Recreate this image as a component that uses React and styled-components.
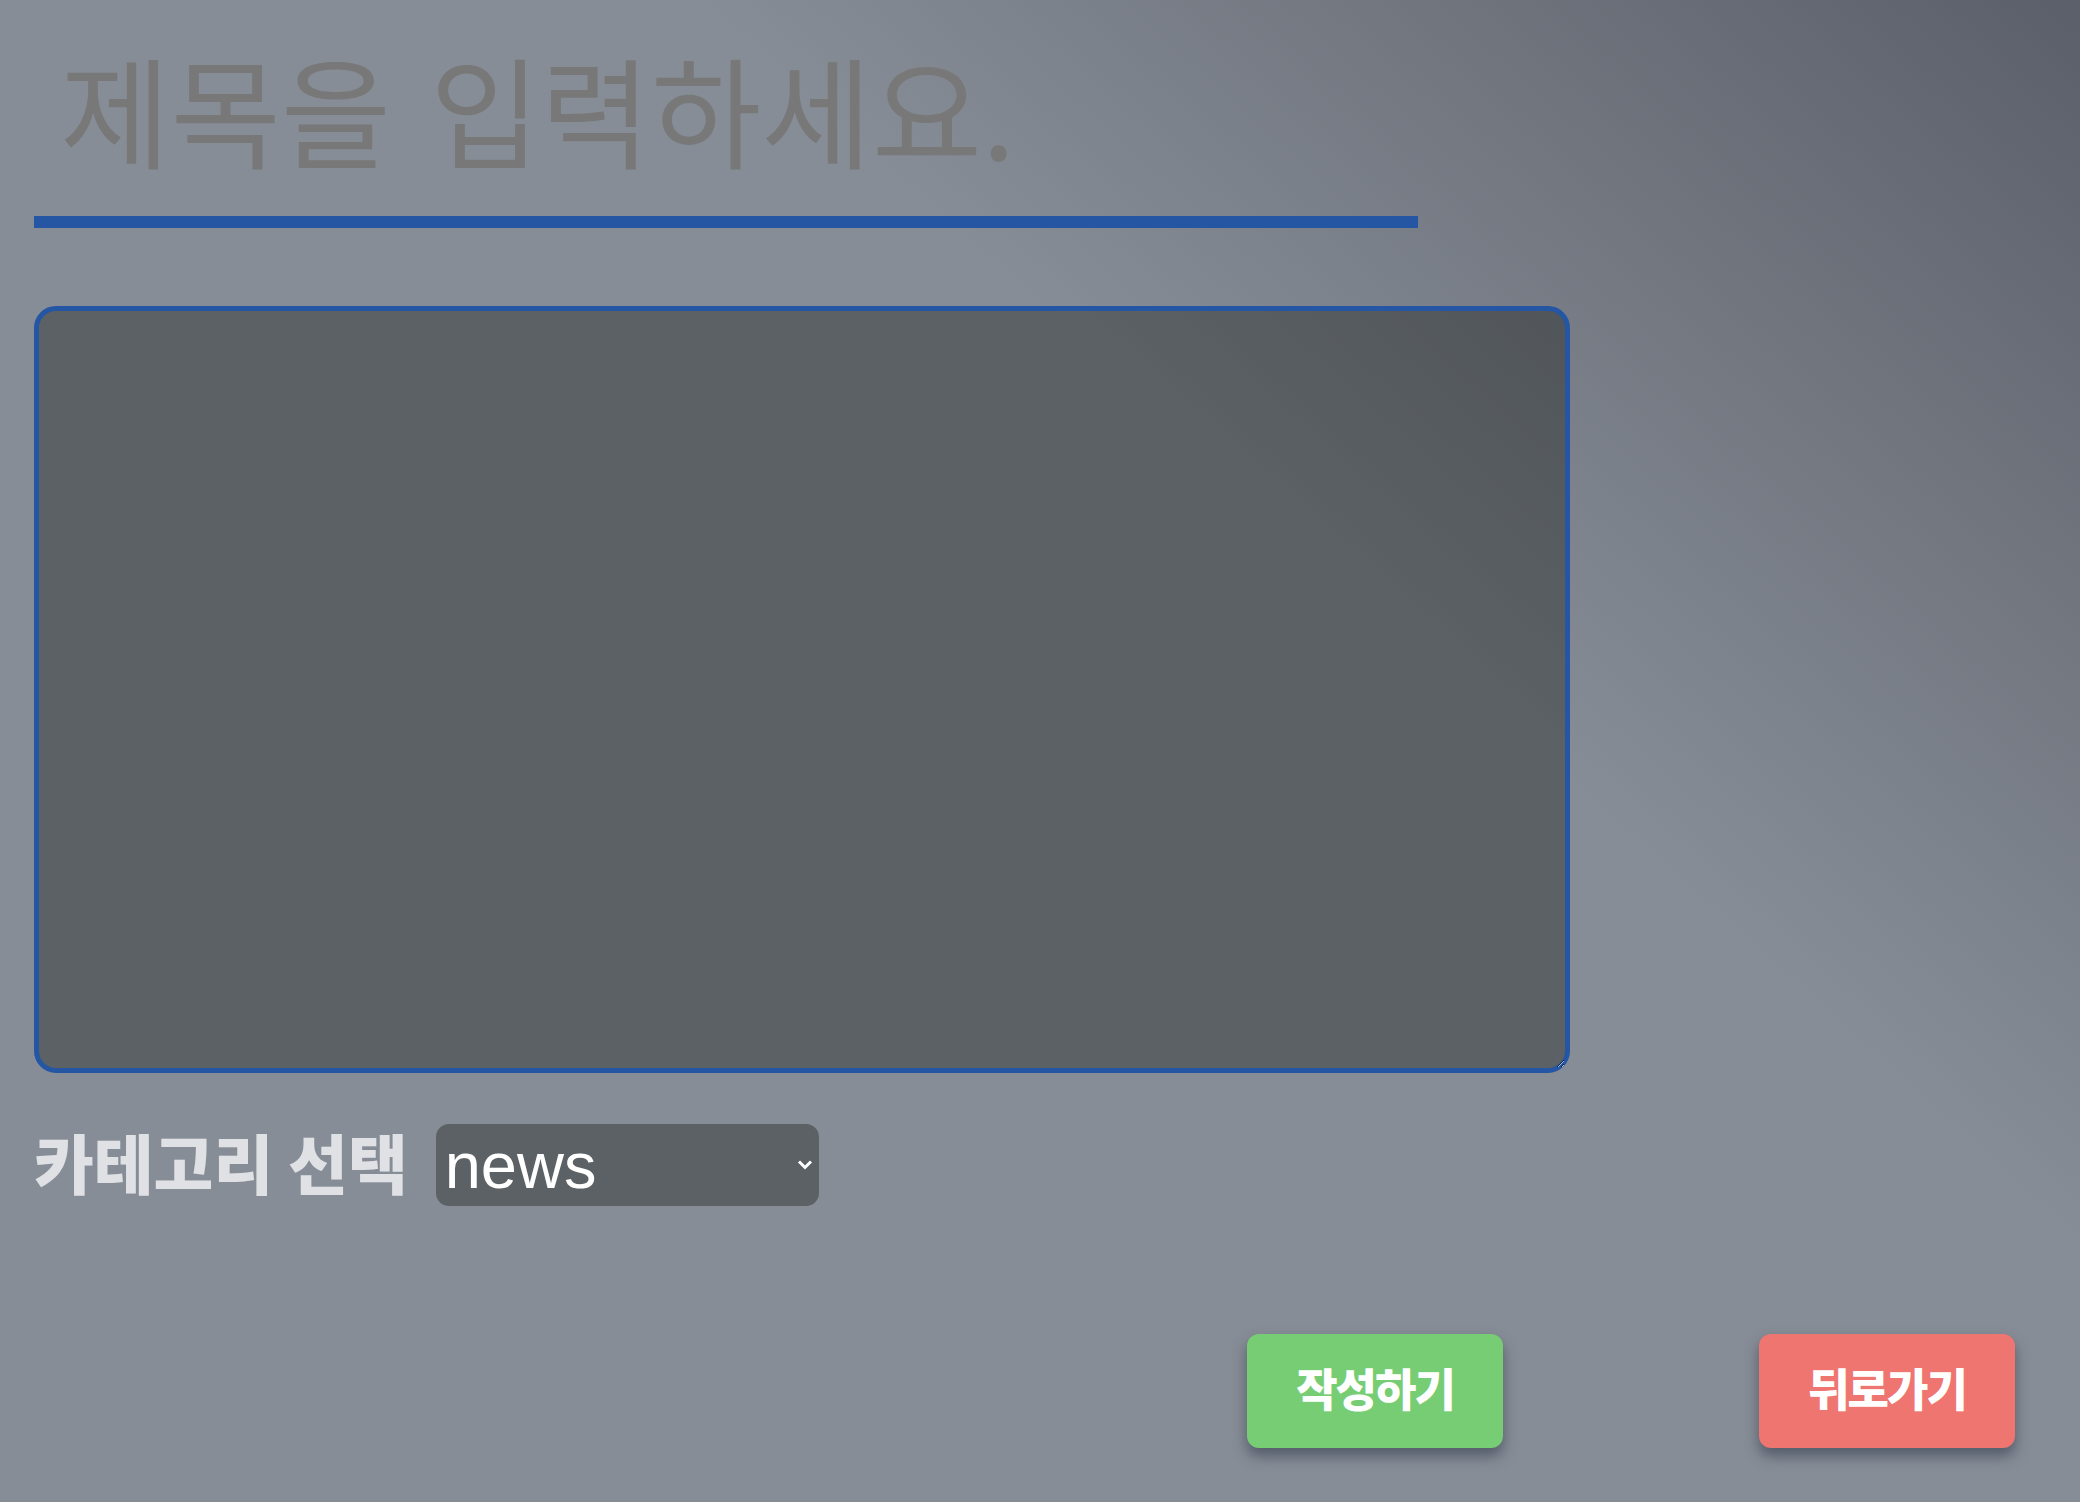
import React from "react";
import styled, { createGlobalStyle } from "styled-components";

const GlobalStyle = createGlobalStyle`
  html, body {
    margin: 0;
    padding: 0;
  }
  body {
    min-height: 1502px;
    background: linear-gradient(222deg, #5b5f69 0%, #878d96 37%, #878d96 100%);
    background-attachment: fixed;
    font-family: "Noto Sans CJK KR", "Noto Sans", sans-serif;
  }
`;

const Page = styled.main`
  box-sizing: border-box;
  width: 2080px;
  min-height: 1502px;
  padding: 0 65px 0 34px;
  display: flex;
  flex-direction: column;
`;

const TitleInput = styled.input`
  box-sizing: border-box;
  width: 1384px;
  height: 228px;
  padding: 0 24px 0 26px;
  border: none;
  border-bottom: 12px solid #2456a4;
  background: transparent;
  outline: none;
  font-family: "Noto Sans CJK KR", sans-serif;
  font-weight: 400;
  font-size: 120px;
  letter-spacing: 0px;
  word-spacing: 12px;
  color: #333;
  &::placeholder {
    color: #787878;
  }
`;

const Body = styled.textarea`
  box-sizing: border-box;
  margin-top: 78px;
  width: 1536px;
  height: 767px;
  border: 5px solid #2456a4;
  border-radius: 22px;
  background: rgba(4, 7, 0, 0.32);
  color: #fff;
  font-family: "Noto Sans CJK KR", sans-serif;
  font-size: 40px;
  padding: 16px;
  outline: none;
`;

const CategoryRow = styled.div`
  margin-top: 51px;
  display: flex;
  align-items: center;
  gap: 28px;
`;

const CategoryLabel = styled.label`
  font-family: "Noto Sans CJK KR", sans-serif;
  font-weight: 900;
  font-size: 65px;
  letter-spacing: 0px;
  color: #dfe1e5;
  line-height: 1;
  margin-top: -8px;
`;

const SelectWrap = styled.div`
  position: relative;
  width: 383px;
  height: 82px;
`;

const Select = styled.select`
  appearance: none;
  -webkit-appearance: none;
  box-sizing: border-box;
  width: 100%;
  height: 100%;
  border: none;
  border-radius: 13px;
  background: rgba(4, 7, 0, 0.32);
  color: #fff;
  font-family: "Liberation Sans", Arial, sans-serif;
  font-size: 65px;
  padding: 0 40px 0 9px;
  outline: none;
`;

const Chevron = styled.svg`
  position: absolute;
  right: 6px;
  top: 35px;
  width: 16px;
  height: 11px;
  pointer-events: none;
`;

const ButtonRow = styled.div`
  margin-top: 128px;
  display: flex;
  justify-content: flex-end;
  gap: 256px;
`;

const ActionButton = styled.button`
  box-sizing: border-box;
  width: 256px;
  height: 114px;
  padding: 0 0 8px;
  border: none;
  border-radius: 12px;
  background: ${(p) => p.$bg};
  color: #fff;
  font-family: "Noto Sans CJK KR", sans-serif;
  font-weight: 900;
  font-size: 45px;
  letter-spacing: -2px;
  box-shadow: 0 8px 14px rgba(40, 50, 70, 0.55);
  cursor: pointer;
`;

export default function App() {
  return (
    <>
      <GlobalStyle />
      <Page>
        <TitleInput placeholder="제목을 입력하세요." />
        <Body />
        <CategoryRow>
          <CategoryLabel htmlFor="cat">카테고리 선택</CategoryLabel>
          <SelectWrap>
            <Select id="cat" defaultValue="news">
              <option value="news">news</option>
              <option value="sports">sports</option>
              <option value="life">life</option>
            </Select>
            <Chevron viewBox="0 0 16 11">
              <path d="M2 2.5 L8 8.5 L14 2.5" fill="none" stroke="#fff" strokeWidth="3" />
            </Chevron>
          </SelectWrap>
        </CategoryRow>
        <ButtonRow>
          <ActionButton $bg="#77cd74">작성하기</ActionButton>
          <ActionButton $bg="#ef7571">뒤로가기</ActionButton>
        </ButtonRow>
      </Page>
    </>
  );
}
